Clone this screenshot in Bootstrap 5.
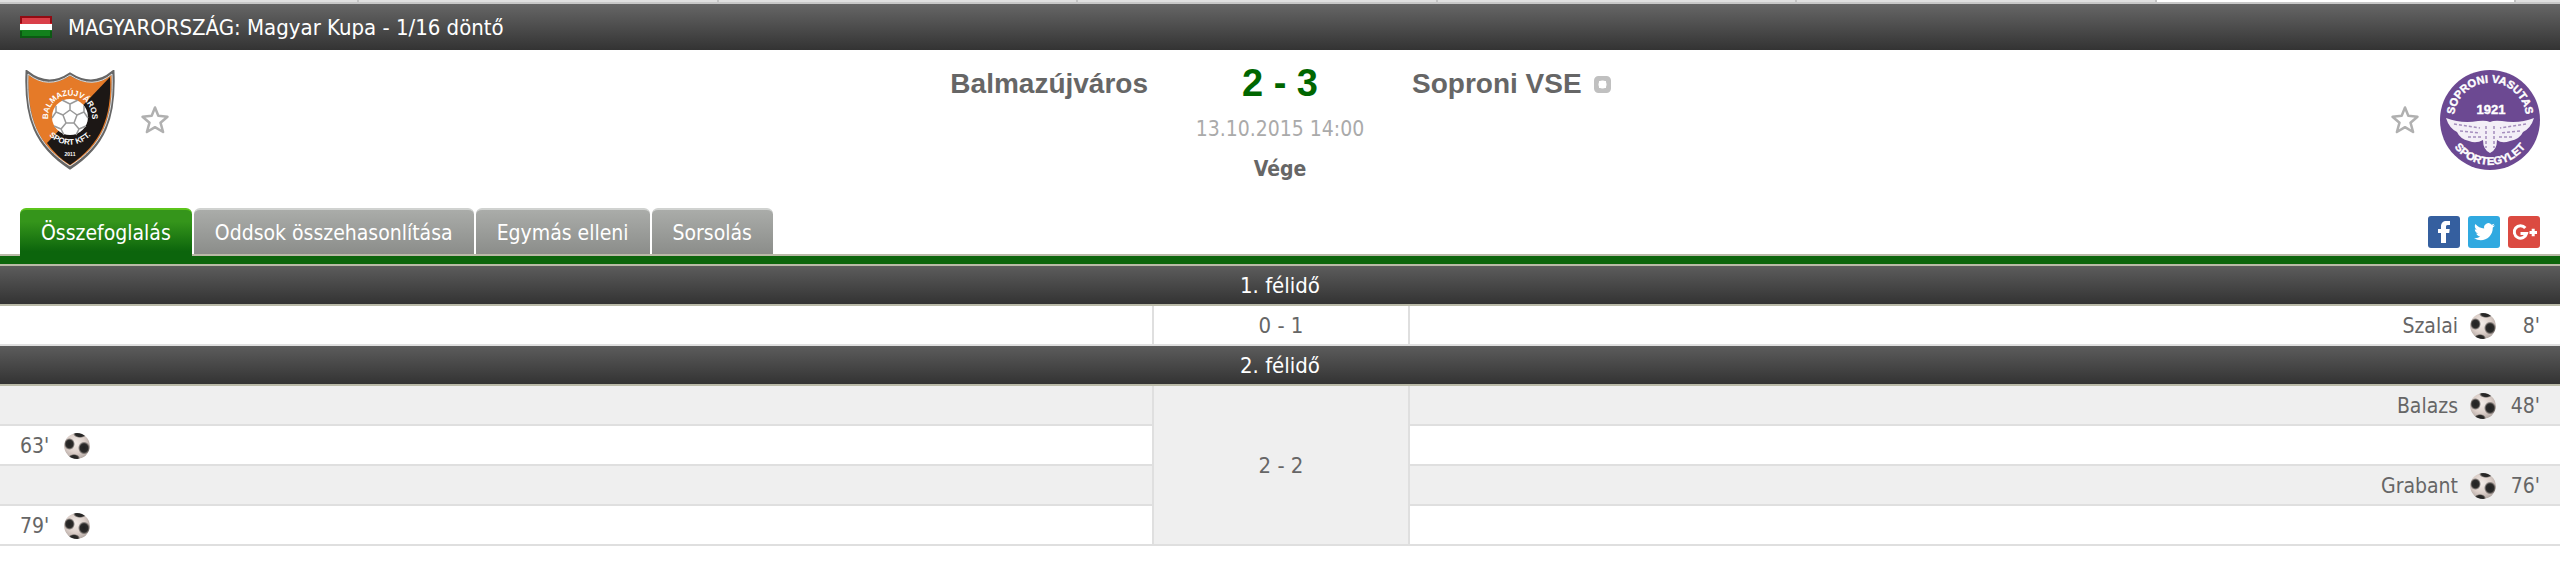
<!DOCTYPE html>
<html lang="hu">
<head>
<meta charset="utf-8">
<meta name="viewport" content="width=device-width, initial-scale=1">
<title>Balmazújváros - Soproni VSE</title>
<link href="https://cdn.jsdelivr.net/npm/bootstrap@5.3.0/dist/css/bootstrap.min.css" rel="stylesheet">
<style>
body{font-family:"DejaVu Sans Condensed","DejaVu Sans",sans-serif;font-size:21px;line-height:26px;color:#666;background:#fff}
.top-strip{height:4px;background:#e0e0e0;border-bottom:2px solid #c8c8c8}
.top-strip span{flex:0 0 14.04%;border-right:2px solid #c4c4c4}
.top-strip .open{background:#fff}
.league{min-height:46px;padding:0 20px;gap:16px;background:linear-gradient(#666,#333);color:#fff;font-size:22px}
.league span{padding-top:2px}
.match{min-height:158px}
.side{width:45%;min-width:0}
.mid{width:10%;white-space:nowrap;padding-top:14px}
.crest-box{gap:20px;padding:20px 20px 0}
.team{font:bold 28px/40px "Liberation Sans",Arial,sans-serif;color:#666;padding:14px 4px 0;height:54px;gap:12px}
.score{font:bold 38px/38px "Liberation Sans",Arial,sans-serif;color:#060}
.when{color:#aaa;margin:14px 0}
.star{border:0;background:none;padding:0;width:30px;height:30px;line-height:0}
.tabs{border-bottom:2px solid #babaa8;padding:0 20px}
.tab-list{gap:2px}
.tab-item{height:46px;padding:9px 21px 0;line-height:28px;color:#fff;text-decoration:none;white-space:nowrap;border-top:2px solid #d0d2d0;border-radius:6px 6px 0 0;background:linear-gradient(#aaaca9,#8b8d8a)}
.tab-item:hover{color:#fff}
.tab-item.active{height:48px;margin-bottom:-2px;border-top-color:#5cc41c;background:linear-gradient(#35951b 25%,#0c650c 90%)}
.share{gap:8px;margin-bottom:6px}
.share a{line-height:0}
.green-bar{height:10px;background:#0c650c;border-bottom:2px solid #babaa8}
.events{width:100%;table-layout:fixed;border-collapse:separate;border-spacing:0}
.events th,.events td{height:40px;padding:1px 20px 0;border-bottom:2px solid #dfdfdf;vertical-align:middle}
.events th{background:linear-gradient(#5c5c5c,#333);color:#fff;font-size:22px;font-weight:400;text-align:center;border-bottom-color:#babaa8}
.events .res{border-left:2px solid #dfdfdf;text-align:center;font-size:22px}
.events .away{border-left:2px solid #dfdfdf}
.events .shade{background:#efefef}
.incident{gap:12px}
.minute{width:32px;white-space:nowrap}
.away .minute{text-align:right}
.col-side{width:45%}
.col-mid{width:10%}
</style>
</head>
<body>
<svg class="position-absolute" width="0" height="0" aria-hidden="true">
<defs>
<radialGradient id="skin" cx=".45" cy=".4" r=".6"><stop offset="0" stop-color="#f4eeea"/><stop offset=".6" stop-color="#dccfc9"/><stop offset="1" stop-color="#b5aaa5"/></radialGradient>
<radialGradient id="spot"><stop offset="0" stop-color="#222"/><stop offset=".65" stop-color="#2c2b2a"/><stop offset="1" stop-color="#2c2b2a" stop-opacity="0"/></radialGradient>
<clipPath id="round"><circle cx="13" cy="13" r="13"/></clipPath>
<symbol id="ball" viewBox="0 0 26 26"><g clip-path="url(#round)"><circle cx="13" cy="13" r="13" fill="url(#skin)"/><g fill="url(#spot)"><ellipse cx="5.500" cy="11" rx="5.500" ry="6"/><ellipse cx="20" cy="15" rx="6" ry="6.500"/><ellipse cx="16" cy="1" rx="7" ry="4"/><ellipse cx="10" cy="25" rx="6" ry="4"/></g></g></symbol>
<symbol id="star" viewBox="0 0 30 30"><path d="M15 2.500l3.300 8.300 9.200.9-7 6 2.600 9.300-8.100-4.800-8.100 4.800 2.600-9.300-7-6 9.200-.9z" fill="#fff" stroke="#b0b0b0" stroke-width="2.500" stroke-linejoin="round"/></symbol>
</defs>
</svg>

<div class="top-strip d-flex overflow-hidden"><span></span><span></span><span></span><span></span><span></span><span></span><span class="open"></span></div>

<header class="league d-flex align-items-center">
<svg width="32" height="22" viewBox="0 0 32 22" role="img" aria-label="Magyarország"><path fill="#d0101c" d="M0 0h32v8H0z"/><path fill="#fff" d="M0 8h32v6H0z"/><path fill="#12801c" d="M0 14h32v8H0z"/><path fill="#fff" opacity=".2" d="M2 2h28v9H2z"/><path d="M0 7V0h32v7M0 15v7h32v-7" fill="none" stroke="#000" stroke-opacity=".3" stroke-width="4"/></svg>
<span>MAGYARORSZÁG: Magyar Kupa - 1/16 döntő</span>
</header>

<main>
<section class="match d-flex align-items-start">
<div class="side d-flex justify-content-between align-items-start">
<div class="crest-box d-flex align-items-center">
<svg width="100" height="100" viewBox="0 0 100 100" role="img" aria-label="Balmazújváros">
<defs><path id="a1" d="M29 54a22 22 0 1 1 42 0"/><path id="a2" d="M23 54A28 28 0 0 0 77 54"/></defs>
<path d="M7 2Q28 19 50 4Q73 19 93 2C95 48 84 76 50 98C16 76 5 48 7 2z" fill="#e57a28" stroke="#666" stroke-width="3"/>
<path d="M90 7C92 47 81 74 50 95Q36 86 27 73z" fill="#1c1715"/>
<path d="M8 4Q28 20 50 5Q73 20 92 4C94 48 83 75 50 96C17 75 6 48 8 4z" fill="none" stroke="#ddd"/>
<circle cx="50" cy="47" r="18" fill="#fff"/>
<path fill="none" stroke="#999" stroke-width="1.500" d="M50 40l7 5-3 8h-8l-3-8zM50 40v-6l-8-4M50 34l8-4M57 45l7-3v-6M64 42l4 6M54 53l5 6 7-3M59 59l-3 6M46 53l-5 6-7-3M41 59l3 6M43 45l-7-3v-6M36 42l-4 6"/>
<g fill="#fff" font-family="Liberation Sans" font-weight="bold" text-anchor="middle"><text font-size="8"><textPath href="#a1" startOffset="50%">BALMAZÚJVÁROS</textPath></text><text font-size="8"><textPath href="#a2" startOffset="50%">SPORT KFT.</textPath></text><text x="50" y="86" font-size="5">2011</text></g>
</svg>
<button type="button" class="star" aria-label="Balmazújváros a kedvencekhez"><svg width="30" height="30"><use href="#star"/></svg></button>
</div>
<div class="team">Balmazújváros</div>
</div>
<div class="mid text-center">
<div class="score">2 - 3</div>
<div class="when">13.10.2015 14:00</div>
<div class="fw-bold">Vége</div>
</div>
<div class="side d-flex justify-content-between align-items-start">
<div class="team d-flex align-items-center"><span>Soproni VSE</span><svg width="17" height="17" viewBox="0 0 17 17" aria-hidden="true"><rect x="2.500" y="2.500" width="12" height="12" rx="2" fill="#fff" stroke="#c0c0c0" stroke-width="5"/><circle cx="8.500" cy="8.500" r="4" fill="#fff"/></svg></div>
<div class="crest-box d-flex align-items-center">
<button type="button" class="star" aria-label="Soproni VSE a kedvencekhez"><svg width="30" height="30"><use href="#star"/></svg></button>
<svg width="100" height="100" viewBox="0 0 100 100" role="img" aria-label="Soproni VSE">
<defs><path id="b1" d="M21 70A36 36 0 1 1 79 70"/><path id="b2" d="M8 66A45 45 0 0 0 92 66"/></defs>
<circle cx="50" cy="50" r="50" fill="#6c4992"/>
<g fill="#fff" stroke="#fff" stroke-width=".4" font-family="Liberation Sans" font-weight="bold" text-anchor="middle"><text font-size="11"><textPath href="#b1" startOffset="50%">SOPRONI VASUTAS</textPath></text><text font-size="11"><textPath href="#b2" startOffset="50%">SPORTEGYLET</textPath></text><text x="51" y="44" font-size="13">1921</text></g>
<path d="M6 48Q22 54 38 51Q46 50 50 52Q54 50 62 51Q79 54 94 48Q91 58 83 62Q80 69 70 71Q62 74 57 70Q57 80 50 83Q43 80 43 70Q36 74 29 71Q20 69 17 62Q9 58 6 48z" fill="#f3eff7"/>
<path d="M14 54l26 4M20 61l20 2M28 67h14M86 54l-26 4M80 61l-20 2M72 67H58M46 56v22M54 56v22" stroke="#a48dbd" stroke-width="1.500" stroke-dasharray="3 2"/>
</svg>
</div>
</div>
</section>

<nav class="tabs d-flex align-items-end justify-content-between">
<div class="tab-list d-flex align-items-start">
<a href="#" class="tab-item active">Összefoglalás</a>
<a href="#" class="tab-item">Oddsok összehasonlítása</a>
<a href="#" class="tab-item">Egymás elleni</a>
<a href="#" class="tab-item">Sorsolás</a>
</div>
<div class="share d-flex">
<a href="#" aria-label="Facebook"><svg width="32" height="32" viewBox="0 0 32 32"><rect width="32" height="32" rx="3" fill="#355f9f"/><path fill="#fff" d="M13 27V17h-3v-4h3v-2.500C13 7 15 5 18.500 5H22v4h-2.300C18.300 9 18 9.700 18 11v2h3.700l-.5 4H18v10z"/></svg></a>
<a href="#" aria-label="Twitter"><svg width="32" height="32" viewBox="0 0 32 32"><rect width="32" height="32" rx="3" fill="#30a9e0"/><path fill="#fff" d="M27 9.300c-.8.400-1.600.6-2.500.7.900-.5 1.500-1.300 1.800-2.300-.8.500-1.700.8-2.700 1A4.300 4.300 0 0 0 16.200 12.600C12.700 12.400 9.500 10.700 7.400 8.100c-1.200 2-.5 4.500 1.300 5.700-.7 0-1.300-.2-1.900-.5 0 2.100 1.500 3.800 3.400 4.200-.6.200-1.300.2-1.900.1.500 1.700 2.100 2.900 4 3A8.700 8.700 0 0 1 6 22.300c8.800 5.300 19-.8 18.800-10.800.9-.6 1.600-1.400 2.200-2.200z"/></svg></a>
<a href="#" aria-label="Google+"><svg width="32" height="32" viewBox="0 0 32 32"><rect width="32" height="32" rx="3" fill="#db4a41"/><path fill="none" stroke="#fff" stroke-width="3" d="M17.300 12A6.200 6.200 0 1 0 18.500 17.500H12.500"/><path fill="none" stroke="#fff" stroke-width="3" d="M21.500 16.500h7.500M25.200 12.800v7.500"/></svg></a>
</div>
</nav>
<div class="green-bar"></div>

<table class="events">
<colgroup><col class="col-side"><col class="col-mid"><col class="col-side"></colgroup>
<tbody>
<tr><th colspan="3">1. félidő</th></tr>
<tr><td></td><td class="res">0 - 1</td><td class="away"><div class="incident d-flex align-items-center justify-content-end"><span>Szalai</span><svg width="26" height="26"><use href="#ball"/></svg><span class="minute">8'</span></div></td></tr>
</tbody>
<tbody>
<tr><th colspan="3">2. félidő</th></tr>
<tr><td class="shade"></td><td class="res shade" rowspan="4">2 - 2</td><td class="away shade"><div class="incident d-flex align-items-center justify-content-end"><span>Balazs</span><svg width="26" height="26"><use href="#ball"/></svg><span class="minute">48'</span></div></td></tr>
<tr><td><div class="incident d-flex align-items-center"><span class="minute">63'</span><svg width="26" height="26"><use href="#ball"/></svg></div></td><td class="away"></td></tr>
<tr><td class="shade"></td><td class="away shade"><div class="incident d-flex align-items-center justify-content-end"><span>Grabant</span><svg width="26" height="26"><use href="#ball"/></svg><span class="minute">76'</span></div></td></tr>
<tr><td><div class="incident d-flex align-items-center"><span class="minute">79'</span><svg width="26" height="26"><use href="#ball"/></svg></div></td><td class="away"></td></tr>
</tbody>
</table>
</main>
<script src="https://cdn.jsdelivr.net/npm/bootstrap@5.3.0/dist/js/bootstrap.bundle.min.js"></script>
</body>
</html>
